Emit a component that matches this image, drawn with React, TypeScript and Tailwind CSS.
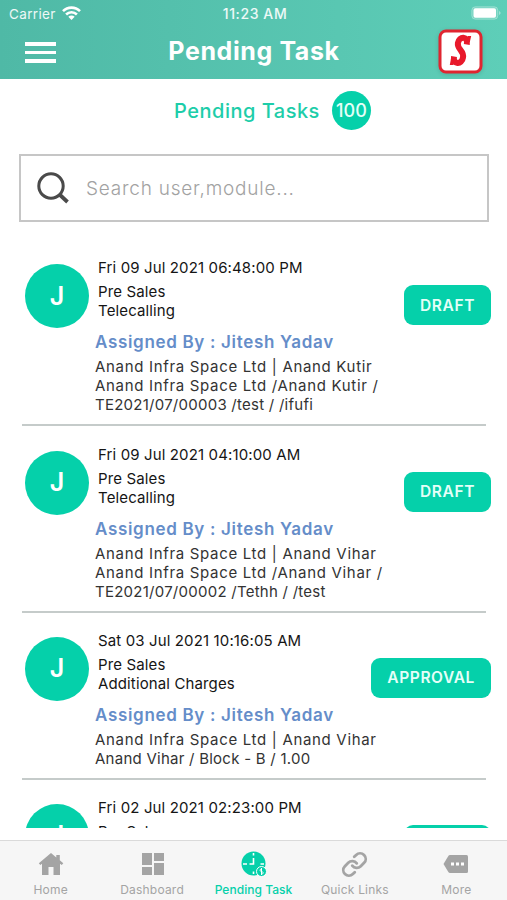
import clsx from 'clsx';
import { Link } from 'lucide-react';
import type { FC, ReactNode } from 'react';

type Task = {
  date: string;
  module: string;
  type: string;
  assignee: string;
  details: string[];
  reference?: string;
  status: string;
};

const tasks: Task[] = [
  {
    date: 'Fri 09 Jul 2021 06:48:00 PM',
    module: 'Pre Sales',
    type: 'Telecalling',
    assignee: 'Jitesh Yadav',
    details: ['Anand Infra Space Ltd | Anand Kutir', 'Anand Infra Space Ltd /Anand Kutir /'],
    reference: 'TE2021/07/00003 /test / /ifufi',
    status: 'DRAFT',
  },
  {
    date: 'Fri 09 Jul 2021 04:10:00 AM',
    module: 'Pre Sales',
    type: 'Telecalling',
    assignee: 'Jitesh Yadav',
    details: ['Anand Infra Space Ltd | Anand Vihar', 'Anand Infra Space Ltd /Anand Vihar /'],
    reference: 'TE2021/07/00002 /Tethh / /test',
    status: 'DRAFT',
  },
  {
    date: 'Sat 03 Jul 2021 10:16:05 AM',
    module: 'Pre Sales',
    type: 'Additional Charges',
    assignee: 'Jitesh Yadav',
    details: ['Anand Infra Space Ltd | Anand Vihar'],
    reference: 'Anand Vihar / Block - B / 1.00',
    status: 'APPROVAL',
  },
  {
    date: 'Fri 02 Jul 2021 02:23:00 PM',
    module: 'Pre Sales',
    type: '',
    assignee: '',
    details: [],
    status: 'DRAFT',
  },
];

const StatusBar: FC = () => (
  <div className="flex h-7 items-center justify-between pl-[9px] pr-[6px] text-[13.5px] text-white/90">
    <div className="flex flex-1 items-center gap-[6px]">
      <span className="tracking-[0.35px]">Carrier</span>
      <svg className="-mt-[3px]" width="19" height="14" viewBox="0 0 19 14" fill="none" stroke="white" strokeWidth="2.6">
        <path d="M1 5.2C5.8 .4 13.2 .4 18 5.2" />
        <path d="M4.1 8.5C7.1 5.5 11.9 5.5 14.9 8.5" />
        <path d="M9.5 14 6.3 10.8C8.2 9 10.8 9 12.7 10.8Z" fill="white" stroke="none" />
      </svg>
    </div>
    <span className="text-sm font-medium tracking-[0.6px]">11:23 AM</span>
    <div className="flex flex-1 justify-end">
      <svg className="-mt-[2px]" width="30" height="14" viewBox="0 0 30 14">
        <rect x=".8" y=".8" width="26" height="12.4" rx="3.5" fill="white" fillOpacity=".15" stroke="white" strokeOpacity=".3" />
        <rect x="2.5" y="2.3" width="22.5" height="9.4" rx="1.8" fill="white" />
        <path d="M28 5v4c1.2-.6 1.6-1.2 1.6-2s-.4-1.4-1.6-2Z" fill="white" fillOpacity=".4" />
      </svg>
    </div>
  </div>
);

const Header: FC = () => (
  <header className="h-[79px] shrink-0 bg-linear-to-r from-[#4fb9a6] to-[#5eceb8]">
    <StatusBar />
    <div className="grid grid-cols-[1fr_auto_1fr] items-center pl-[25px] pr-6">
      <div className="mt-[3px] grid w-[31px] gap-[5px]">
        <span className="h-[3.5px] bg-white" />
        <span className="h-[3.5px] bg-white" />
        <span className="h-[3.5px] bg-white" />
      </div>
      <h1 className="text-[25px] font-bold leading-[46px] tracking-[0.6px] text-white">Pending Task</h1>
      <svg className="mt-px justify-self-end drop-shadow-sm" width="45" height="45" viewBox="0 0 45 45">
        <rect x="2" y="2" width="41" height="41" rx="6" fill="white" stroke="#e02530" strokeWidth="3" />
        <path
          d="M28.8 15.5C30.5 6.5 21 7 19.9 14C18.9 20.5 26.3 21.5 25 28.5C23.8 36.5 14.5 35.5 16 27.5"
          fill="none"
          stroke="#e8192b"
          strokeWidth="6"
        />
        <path d="M29.5 7h3.7l-1.4 6h-3ZM13 29.5h3l-.4 6.5h-3.8Z" fill="#e8192b" />
      </svg>
    </div>
  </header>
);

const Search: FC = () => (
  <div className="ml-[19px] mr-[18px] flex h-[68px] shrink-0 items-center gap-4 border-2 border-[#c6c6c6] pl-4">
    <svg width="33" height="33" viewBox="0 0 33 33" fill="none" stroke="#4a4a4a" strokeWidth="3">
      <circle cx="14" cy="14" r="12.2" />
      <path d="m22 22 8.5 8" strokeWidth="3.8" />
    </svg>
    <span className="mt-0.5 text-[19px] font-light tracking-[0.78px] text-[#a2a2a2]">Search user,module...</span>
  </div>
);

const TaskCard: FC<{ task: Task }> = ({ task }) => (
  <li className="ml-[22px] mr-[21px] shrink-0 border-b-2 border-[#c5cbca] pb-[10px]">
    <div className="-mr-[5px] flex">
      <div className="ml-[3px] mt-[6px] flex size-16 shrink-0 items-center justify-center rounded-full bg-[#05d0aa] text-[25px] font-semibold text-white">
        J
      </div>
      <div className="ml-[9px] flex-1 text-[15px] leading-[19px] tracking-[0.13px] text-[#151515]">
        <p>{task.date}</p>
        <p className="mt-[5px]">{task.module}</p>
        <p>{task.type}</p>
      </div>
      <div className="mt-[27px] flex h-10 items-center rounded-[9px] bg-[#05d0aa] px-4 text-[15.5px] font-semibold tracking-[0.6px] text-[#e4fff8]">
        {task.status}
      </div>
    </div>
    {task.assignee && (
      <p className="ml-[73px] mt-[3px] text-[17px] font-semibold leading-[22px] tracking-[0.68px] text-[#658dc9]">
        Assigned By : {task.assignee}
      </p>
    )}
    <div className="ml-[73px] mt-1 text-[15px] leading-[19px] text-[#333]">
      {task.details.map((line) => (
        <p key={line} className="tracking-[0.68px]">
          {line}
        </p>
      ))}
      <p className="tracking-[0.25px]">{task.reference}</p>
    </div>
  </li>
);

const HomeIcon: FC = () => (
  <svg width="26" height="24" viewBox="0 0 26 24" fill="currentColor">
    <path d="M13 1 .8 11.3l1.5 1.8L4 11.8V23h6.5v-8h5v8H22V11.8l1.8 1.3 1.5-1.8-3.5-3V3h-3.5v2.4Z" />
  </svg>
);

const DashboardIcon: FC = () => (
  <svg className="ml-px" width="24" height="24" viewBox="0 0 24 24" fill="currentColor">
    <path d="M1 1h10v12H1zM13 1h10v8H13zM1 15h10v8H1zM13 11h10v12H13z" />
  </svg>
);

const TaskIcon: FC = () => (
  <svg className="ml-[2px]" width="26" height="26" viewBox="0 0 26 26">
    <circle cx="12.5" cy="12.5" r="12" fill="#05d0aa" />
    <path d="M12.5 2v2.5M12.5 7v6H8.5M2 13h4M19.5 13H23M12.5 20.5v2.5" fill="none" stroke="white" strokeWidth="1.6" />
    <circle cx="20.5" cy="20.5" r="5" fill="#05d0aa" stroke="white" />
    <path d="M21 17.8c-2.5 0-2.5 2.6-.5 2.7 2.3.2 2.2 2.8-.5 2.8M20.5 17v7" fill="none" stroke="white" />
  </svg>
);

const MoreIcon: FC = () => (
  <svg width="26" height="20" viewBox="0 0 26 20">
    <path d="M7 1h16.5q1.5 0 1.5 1.5v15q0 1.5-1.5 1.5H7q-1 0-1.5-.8L.5 10l5-8.2Q6 1 7 1Z" fill="currentColor" />
    <path d="M8 8.5h3v3H8zM13 8.5h3v3h-3zM18 8.5h3v3h-3z" fill="white" />
  </svg>
);

const tabs: { label: string; icon: ReactNode; active?: boolean }[] = [
  { label: 'Home', icon: <HomeIcon /> },
  { label: 'Dashboard', icon: <DashboardIcon /> },
  { label: 'Pending Task', icon: <TaskIcon />, active: true },
  { label: 'Quick Links', icon: <Link size={27} strokeWidth={2.5} /> },
  { label: 'More', icon: <MoreIcon /> },
];

const TabBar: FC = () => (
  <nav className="grid h-[60px] shrink-0 grid-cols-5 border-t border-[#dadada] bg-[#f6f6f6]">
    {tabs.map(({ label, icon, active }) => (
      <div key={label} className={clsx('flex flex-col items-center', active ? 'text-[#05d0aa]' : 'text-[#a4a4a4]')}>
        <div className="mt-[9px] flex h-7 items-center">{icon}</div>
        <span
          className={clsx(
            'mt-1 whitespace-nowrap text-xs leading-4',
            active ? 'font-medium tracking-[0.05px]' : 'tracking-[0.2px]',
          )}
        >
          {label}
        </span>
      </div>
    ))}
  </nav>
);

const App: FC = () => (
  <div className="flex h-[900px] w-[507px] flex-col overflow-hidden bg-white font-['Inter',sans-serif]">
    <Header />
    <div className="flex h-[75px] shrink-0 items-start justify-center gap-3 pl-[38px] pt-3">
      <h2 className="text-xl font-medium leading-[40px] tracking-[0.5px] text-[#1dcda9]">Pending Tasks</h2>
      <span className="flex size-[39px] items-center justify-center rounded-full bg-[#05d0aa] text-lg font-medium text-[#e4fff8]">
        100
      </span>
    </div>
    <Search />
    <ul className="mb-3 mt-[36.4px] flex min-h-0 flex-1 flex-col gap-[18.2px] overflow-hidden">
      {tasks.map((task) => (
        <TaskCard key={task.date} task={task} />
      ))}
    </ul>
    <TabBar />
  </div>
);

export default App;
